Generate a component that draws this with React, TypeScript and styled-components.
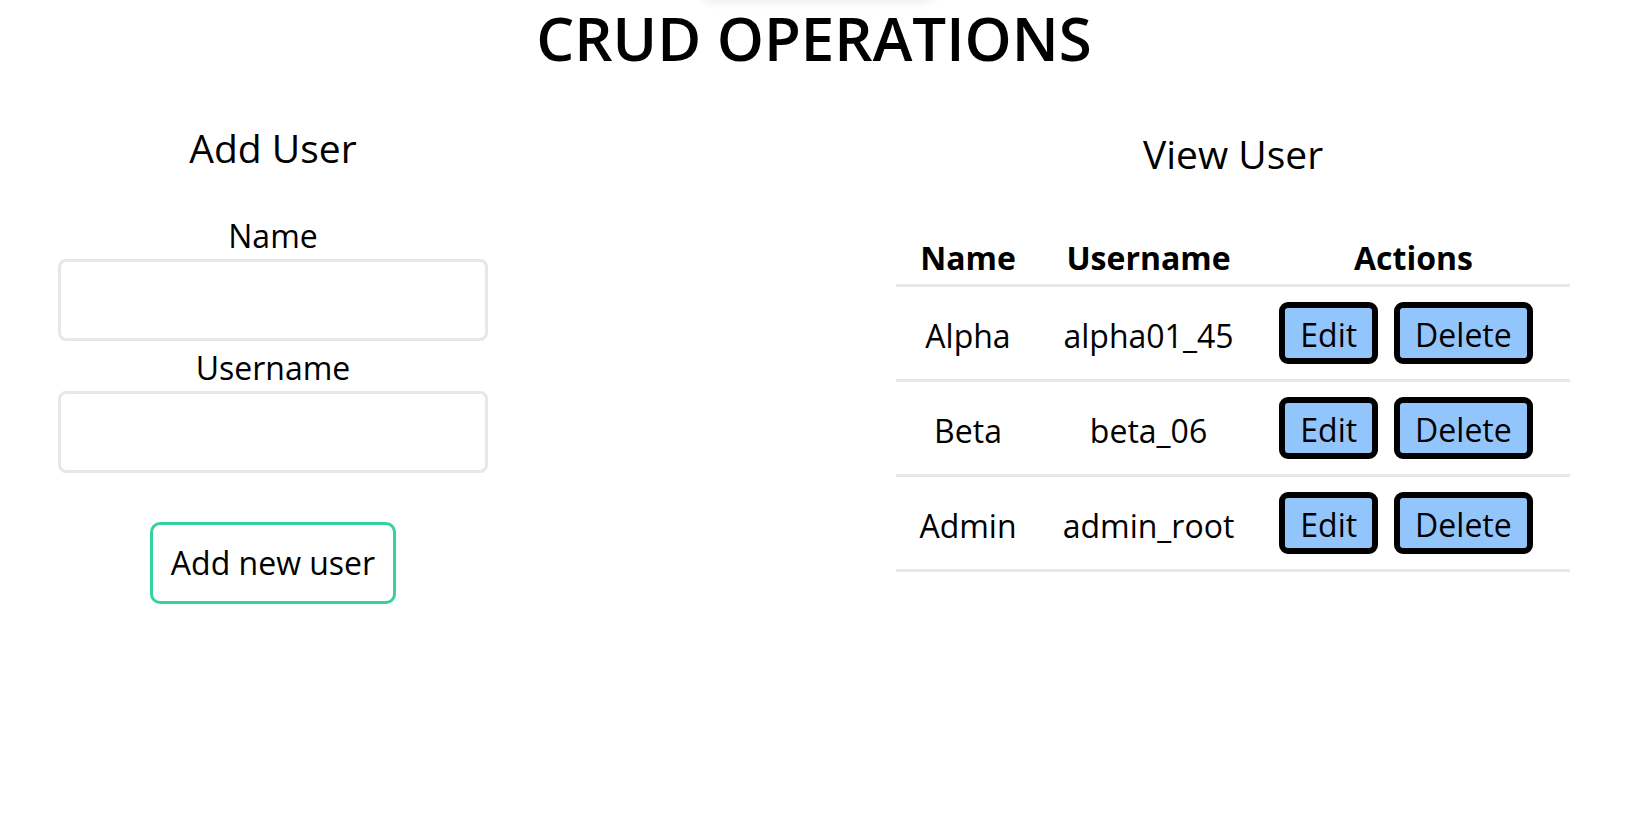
import * as React from 'react';
import styled, { createGlobalStyle } from 'styled-components';

const GlobalStyle = createGlobalStyle`
  html, body {
    margin: 0;
    padding: 0;
    background: #ffffff;
  }
  body {
    font-family: "Open Sans", "Noto Sans", sans-serif;
    color: #000000;
  }
  * {
    box-sizing: border-box;
  }
`;

const Page = styled.div`
  position: relative;
  min-height: 832px;
`;

const ToastShadow = styled.div`
  position: absolute;
  top: -60px;
  left: 702px;
  width: 232px;
  height: 60px;
  border-radius: 8px;
  box-shadow: 0 2px 10px rgba(0, 0, 0, 0.08);
`;

const Title = styled.h1`
  margin: 0;
  padding: 8px 15px 0 0;
  font-size: 60px;
  line-height: 1;
  font-weight: 600;
  text-align: center;
`;

const Columns = styled.div`
  display: flex;
  align-items: flex-start;
  gap: 408px;
  padding-left: 58px;
`;

const AddColumn = styled.div`
  width: 430px;
  display: flex;
  flex-direction: column;
  align-items: center;
  padding-top: 60px;
`;

const ViewColumn = styled.div`
  width: 674px;
  display: flex;
  flex-direction: column;
  align-items: center;
  padding-top: 66px;
`;

const SectionTitle = styled.h2`
  margin: 0;
  font-size: 39px;
  line-height: 1;
  font-weight: 400;
`;

const Form = styled.form`
  width: 100%;
  display: flex;
  flex-direction: column;
  align-items: center;
  margin-top: 53px;
`;

const Label = styled.label<{ $top?: number }>`
  font-size: 32px;
  line-height: 1;
  margin-top: ${(p) => p.$top ?? 0}px;
  margin-bottom: 7px;
`;

const Input = styled.input`
  width: 100%;
  height: 82px;
  border: 3px solid #e5e7eb;
  border-radius: 8px;
  font-family: inherit;
  font-size: 32px;
  padding: 0 16px;
  outline: none;
`;

const AddButton = styled.button`
  margin-top: 49px;
  height: 82px;
  padding: 0 18px;
  border: 3px solid #34d399;
  border-radius: 10px;
  background: #ffffff;
  font-family: inherit;
  font-size: 32px;
  line-height: 1;
  color: #000000;
  cursor: pointer;
`;

const Table = styled.table`
  margin-top: 69px;
  width: 674px;
  table-layout: fixed;
  border-collapse: collapse;
`;

const HeadCell = styled.th`
  font-size: 32px;
  line-height: 1;
  font-weight: 700;
  text-align: center;
  padding: 0 0 10px;
`;

const Row = styled.tr`
  border-bottom: 3px solid #e5e7eb;
`;

const Cell = styled.td<{ $text?: boolean }>`
  font-size: 32px;
  line-height: 1;
  text-align: center;
  vertical-align: middle;
  padding: ${(p) => (p.$text ? '20px 0 14px' : '15px 0')};
`;

const Actions = styled.div`
  display: flex;
  justify-content: center;
  gap: 16px;
  padding-right: 15px;
`;

const ActionButton = styled.button`
  height: 62px;
  padding: 3px 15px 0;
  border: 6px solid #000000;
  border-radius: 9px;
  background: #93c5fd;
  font-family: inherit;
  font-size: 32px;
  line-height: 1;
  color: #000000;
  cursor: pointer;
`;

const users = [
  { name: 'Alpha', username: 'alpha01_45' },
  { name: 'Beta', username: 'beta_06' },
  { name: 'Admin', username: 'admin_root' },
];

export default function App() {
  return (
    <Page>
      <GlobalStyle />
      <ToastShadow />
      <Title>CRUD OPERATIONS</Title>
      <Columns>
        <AddColumn>
          <SectionTitle>Add User</SectionTitle>
          <Form onSubmit={(e) => e.preventDefault()}>
            <Label htmlFor="name">Name</Label>
            <Input id="name" type="text" />
            <Label htmlFor="username" $top={11}>
              Username
            </Label>
            <Input id="username" type="text" />
            <AddButton type="submit">Add new user</AddButton>
          </Form>
        </AddColumn>
        <ViewColumn>
          <SectionTitle>View User</SectionTitle>
          <Table>
            <colgroup>
              <col style={{ width: 144 }} />
              <col style={{ width: 217 }} />
              <col style={{ width: 313 }} />
            </colgroup>
            <thead>
              <Row>
                <HeadCell>Name</HeadCell>
                <HeadCell>Username</HeadCell>
                <HeadCell>Actions</HeadCell>
              </Row>
            </thead>
            <tbody>
              {users.map((u) => (
                <Row key={u.username}>
                  <Cell $text>{u.name}</Cell>
                  <Cell $text>{u.username}</Cell>
                  <Cell>
                    <Actions>
                      <ActionButton>Edit</ActionButton>
                      <ActionButton>Delete</ActionButton>
                    </Actions>
                  </Cell>
                </Row>
              ))}
            </tbody>
          </Table>
        </ViewColumn>
      </Columns>
    </Page>
  );
}
